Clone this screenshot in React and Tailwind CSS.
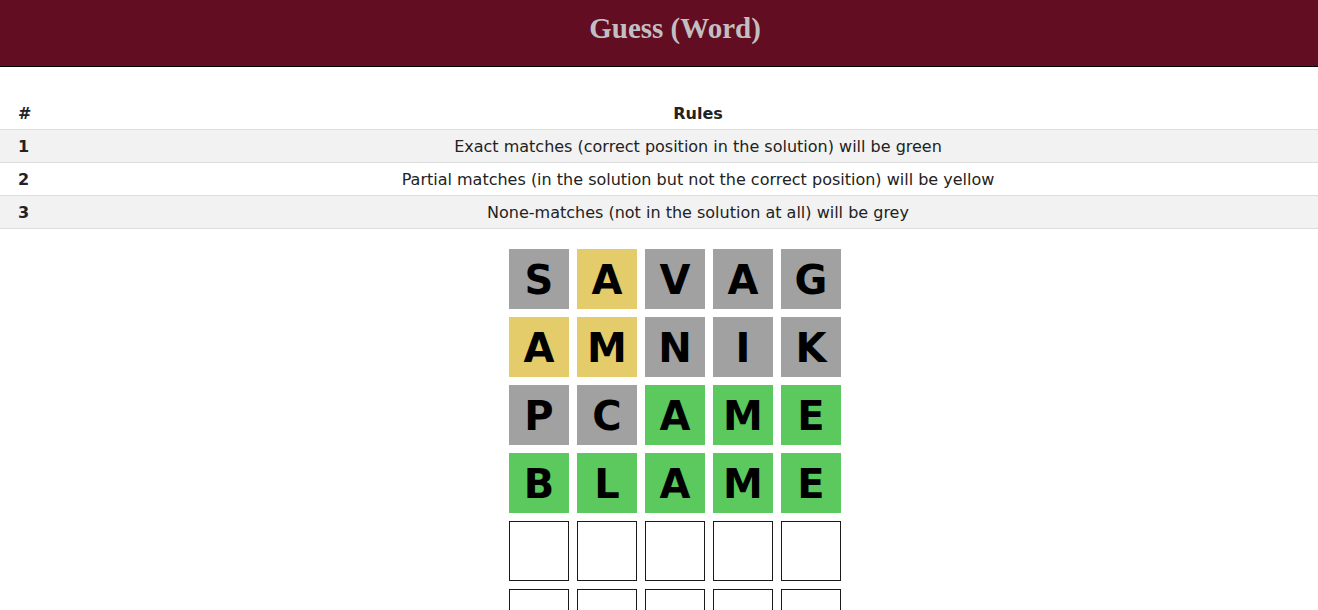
import React from 'react';

const rules = [
  'Exact matches (correct position in the solution) will be green',
  'Partial matches (in the solution but not the correct position) will be yellow',
  'None-matches (not in the solution at all) will be grey',
];

const board = [
  [['S', 'x'], ['A', 'y'], ['V', 'x'], ['A', 'x'], ['G', 'x']],
  [['A', 'y'], ['M', 'y'], ['N', 'x'], ['I', 'x'], ['K', 'x']],
  [['P', 'x'], ['C', 'x'], ['A', 'g'], ['M', 'g'], ['E', 'g']],
  [['B', 'g'], ['L', 'g'], ['A', 'g'], ['M', 'g'], ['E', 'g']],
  [['', ''], ['', ''], ['', ''], ['', ''], ['', '']],
  [['', ''], ['', ''], ['', ''], ['', ''], ['', '']],
];

const tileColor = {
  x: 'bg-[#a1a1a1]',
  y: 'bg-[#e3cc69]',
  g: 'bg-[#5bc95d]',
  '': 'bg-white border border-[#1a1a1a]',
};

function Tile({ letter, state }) {
  return (
    <div className={`w-[60px] h-[60px] flex items-center justify-center pt-[3px] text-[40px] font-bold text-black ${tileColor[state]}`}>
      {letter}
    </div>
  );
}

export default function App() {
  return (
    <div className="min-h-[610px] bg-white font-['DejaVu_Sans',sans-serif]">
      <header className="h-[67px] bg-[#620d21] border-b border-black flex items-center justify-center pl-8">
        <h1 className="font-['Liberation_Serif',serif] font-bold text-[29px] text-[#c3bfc0] -mt-[8px]">
          Guess (Word)
        </h1>
      </header>

      <table className="w-full mt-[29px] border-collapse text-[16px] text-[#222]">
        <thead>
          <tr className="h-[33px] border-b border-[#dddddd]">
            <th className="w-[78px] pl-[18px] pt-[3px] text-left font-bold">#</th>
            <th className="text-center pt-[3px] font-bold">Rules</th>
          </tr>
        </thead>
        <tbody>
          {rules.map((rule, i) => (
            <tr key={i} className={`h-[33px] border-b border-[#dddddd] ${i % 2 === 0 ? 'bg-[#f2f2f2]' : 'bg-white'}`}>
              <td className="pl-[18px] pt-[3px] font-bold">{i + 1}</td>
              <td className="text-center pt-[3px]">{rule}</td>
            </tr>
          ))}
        </tbody>
      </table>

      <div className="flex flex-col items-center gap-2 mt-5 pl-8">
        {board.map((row, r) => (
          <div key={r} className="flex gap-2">
            {row.map(([letter, state], c) => (
              <Tile key={c} letter={letter} state={state} />
            ))}
          </div>
        ))}
      </div>
    </div>
  );
}
